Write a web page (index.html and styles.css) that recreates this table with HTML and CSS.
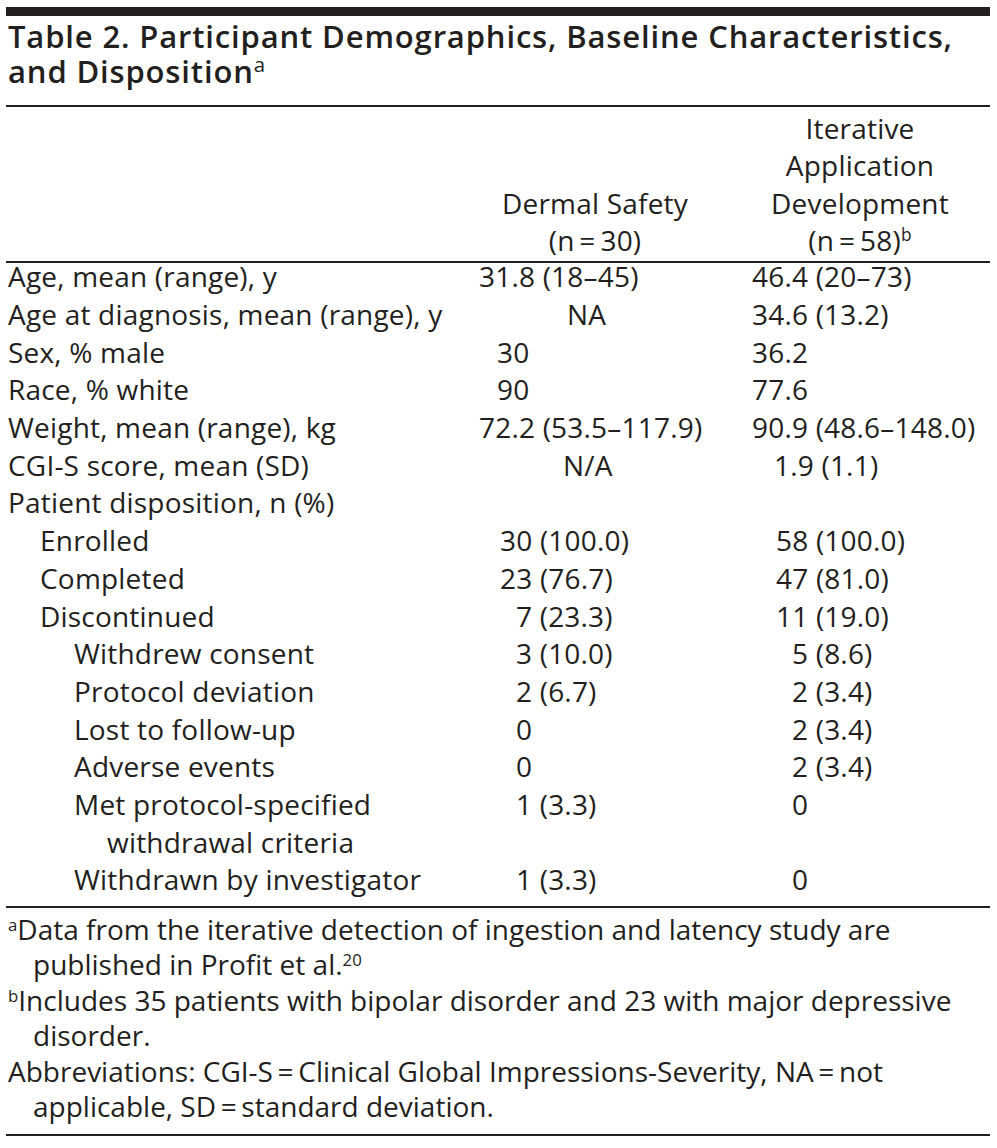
FILE: index.html
```html
<!DOCTYPE html>
<html lang="en">
<head>
<meta charset="utf-8">
<title>Table 2</title>
<link rel="stylesheet" href="styles.css">
</head>
<body>
<div class="page">
  <div class="topbar"></div>
  <h1 class="title">Table 2. Participant Demographics, Baseline Characteristics,<br>and Disposition<sup>a</sup></h1>
  <table class="data">
    <colgroup>
      <col class="col-label">
      <col class="col-dermal">
      <col class="col-iter">
    </colgroup>
    <thead>
      <tr>
        <th class="h-label"></th>
        <th class="h-val">Dermal Safety<br>(n&#8201;=&#8201;30)</th>
        <th class="h-val">Iterative<br>Application<br>Development<br>(n&#8201;=&#8201;58)<sup>b</sup></th>
      </tr>
    </thead>
    <tbody>
      <tr><td class="lab">Age, mean (range), y</td><td class="d2 a">31.8 (18–45)</td><td class="d3 a">46.4 (20–73)</td></tr>
      <tr><td class="lab">Age at diagnosis, mean (range), y</td><td class="d2 na">NA</td><td class="d3 a">34.6 (13.2)</td></tr>
      <tr><td class="lab">Sex, % male</td><td class="d2 b">30</td><td class="d3 a">36.2</td></tr>
      <tr><td class="lab">Race, % white</td><td class="d2 b">90</td><td class="d3 a">77.6</td></tr>
      <tr><td class="lab">Weight, mean (range), kg</td><td class="d2 a">72.2 (53.5–117.9)</td><td class="d3 a">90.9 (48.6–148.0)</td></tr>
      <tr><td class="lab">CGI-S score, mean (SD)</td><td class="d2 nsa">N/A</td><td class="d3 b">1.9 (1.1)</td></tr>
      <tr><td class="lab">Patient disposition, n (%)</td><td class="d2"></td><td class="d3"></td></tr>
      <tr><td class="lab l1">Enrolled</td><td class="d2 c">30 (100.0)</td><td class="d3 c">58 (100.0)</td></tr>
      <tr><td class="lab l1">Completed</td><td class="d2 c">23 (76.7)</td><td class="d3 c">47 (81.0)</td></tr>
      <tr><td class="lab l1">Discontinued</td><td class="d2 e">7 (23.3)</td><td class="d3 c">11 (19.0)</td></tr>
      <tr><td class="lab l2">Withdrew consent</td><td class="d2 e">3 (10.0)</td><td class="d3 e">5 (8.6)</td></tr>
      <tr><td class="lab l2">Protocol deviation</td><td class="d2 e">2 (6.7)</td><td class="d3 e">2 (3.4)</td></tr>
      <tr><td class="lab l2">Lost to follow-up</td><td class="d2 e">0</td><td class="d3 e">2 (3.4)</td></tr>
      <tr><td class="lab l2">Adverse events</td><td class="d2 e">0</td><td class="d3 e">2 (3.4)</td></tr>
      <tr><td class="lab l2">Met protocol-specified<div class="wrap">withdrawal criteria</div></td><td class="d2 e">1 (3.3)</td><td class="d3 e">0</td></tr>
      <tr><td class="lab l2">Withdrawn by investigator</td><td class="d2 e">1 (3.3)</td><td class="d3 e">0</td></tr>
    </tbody>
  </table>
  <div class="notes">
    <p class="note"><sup>a</sup>Data from the iterative detection of ingestion and latency study are published in Profit et al.<sup>20</sup></p>
    <p class="note"><sup>b</sup>Includes 35 patients with bipolar disorder and 23 with major depressive disorder.</p>
    <p class="note">Abbreviations: CGI-S&#8201;=&#8201;Clinical Global Impressions-Severity, NA&#8201;=&#8201;not applicable, SD&#8201;=&#8201;standard deviation.</p>
  </div>
</div>
</body>
</html>
```

FILE: styles.css
```css
html, body {
  margin: 0;
  padding: 0;
  background: #ffffff;
}

body {
  color: #231f20;
  font-family: "Open Sans", "Noto Sans", sans-serif;
}

.page {
  width: 984px;
  margin-left: 6px;
  padding-top: 7px;
}

.topbar {
  height: 9px;
  background: #231f20;
}

.title {
  margin: 0;
  padding: 3px 0 16px 2px;
  font-size: 31px;
  font-weight: 600;
  line-height: 35px;
  letter-spacing: 0.85px;
  white-space: nowrap;
  border-bottom: 2px solid #231f20;
}

.title sup {
  font-size: 0.66em;
  vertical-align: 0.55em;
  line-height: 0;
  font-weight: 400;
}

.data {
  width: 984px;
  border-collapse: collapse;
  font-size: 28px;
  letter-spacing: 0.2px;
  table-layout: fixed;
}

.col-label { width: 454px; }
.col-dermal { width: 270px; }
.col-iter { width: 260px; }

.data th {
  font-weight: 400;
  line-height: 37.3px;
  padding: 3px 0 2px;
  vertical-align: bottom;
  text-align: center;
  border-bottom: 2px solid #231f20;
}

.data th sup {
  font-size: 0.62em;
  vertical-align: 0.6em;
  line-height: 0;
}

.data td {
  line-height: 27.4px;
  padding: 0 0 10.3px;
  vertical-align: top;
  white-space: nowrap;
}

.lab { padding-left: 2px !important; }
.l1 { padding-left: 34px !important; }
.l2 { padding-left: 68px !important; }

.wrap {
  margin-top: 10.3px;
  padding-left: 33px;
}

.d2.a { padding-left: 19px; }
.d2.b { padding-left: 37px; }
.d2.c { padding-left: 40px; }
.d2.e { padding-left: 56px; }
.d2.na { padding-left: 107px; }
.d2.nsa { padding-left: 103px; }

.d3.a { padding-left: 22px; }
.d3.b { padding-left: 44px; }
.d3.c { padding-left: 46px; }
.d3.e { padding-left: 62px; }

.data tbody tr:last-child td {
  padding-bottom: 12px;
}

.notes {
  border-top: 2px solid #231f20;
  border-bottom: 2px solid #231f20;
  padding: 4px 0 9px;
  font-size: 28px;
  line-height: 35.5px;
}

.note {
  margin: 0;
  padding-left: 27px;
  text-indent: -25px;
}

.note sup {
  font-size: 0.6em;
  vertical-align: 0.55em;
  line-height: 0;
}
```
